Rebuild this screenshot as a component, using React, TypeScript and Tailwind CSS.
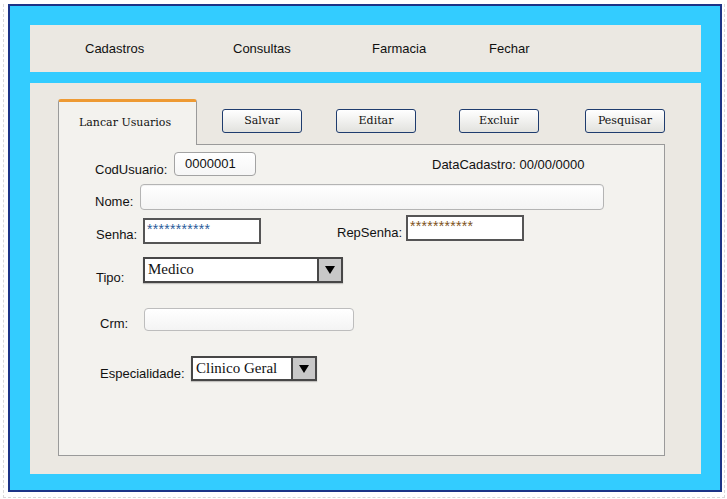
import React from 'react';

const sans = { fontFamily: '"Liberation Sans", Arial, sans-serif' };

function Btn({ label, className }: { label: string; className: string }) {
  return (
    <button
      className={`h-[24px] w-[80px] rounded-[3px] border border-[#1f3c6e] bg-gradient-to-b from-white to-[#e2e2de] text-[11px] text-[#111] font-['DejaVu_Serif',serif] ${className}`}
    >
      {label}
    </button>
  );
}

function Select({ value, width }: { value: string; width: string }) {
  return (
    <div className={`flex h-full ${width} border-2 border-[#474747] bg-white shadow-[0_1px_1px_rgba(0,0,0,0.2)]`}>
      <div className="flex-1 pl-[3px] font-['Liberation_Serif',serif] text-[15px] leading-[20px] text-[#111]">
        {value}
      </div>
      <div className="flex w-[24px] items-center justify-center border-l-2 border-[#474747] bg-[#c8c8c8]">
        <svg width="10" height="8" viewBox="0 0 10 8">
          <path d="M0 0 L10 0 L5 8 Z" fill="#000" />
        </svg>
      </div>
    </div>
  );
}

export default function App() {
  return (
    <div className="h-[499px] w-[727px] overflow-hidden bg-white" style={sans}>
      <div className="ml-[3px] h-[494px] w-[722px] border-b border-l border-r border-dashed border-[#d9d9d9]">
        <div className="ml-[4px] mt-[4px] h-[488px] w-[714px] border-2 border-[#1c3487] bg-[#33ccff] pl-[20px] pt-[19px]">
          {/* menu */}
          <div className="flex h-[47px] w-[671px] items-center bg-[#ebe8e2] pl-[55px] text-[13px] text-[#111]">
            <span className="w-[148px]">Cadastros</span>
            <span className="w-[139px]">Consultas</span>
            <span className="w-[117px]">Farmacia</span>
            <span>Fechar</span>
          </div>

          {/* main panel */}
          <div className="mt-[11px] h-[391px] w-[671px] bg-[#ebe8e2] pl-[28px] pt-[16px]">
            <div className="flex items-start">
              <div className="relative z-10 -mb-px h-[46px] w-[139px] rounded-t-[3px] border-l border-r border-t-[3px] border-[#9a9a9a] border-t-[#ee9a33] bg-[#f3f2ee] pl-[20px] pt-[14px] font-['DejaVu_Serif',serif] text-[11px] leading-[14px] text-[#111]">
                Lancar Usuarios
              </div>
              <Btn label="Salvar" className="ml-[25px] mt-[10px]" />
              <Btn label="Editar" className="ml-[34px] mt-[10px]" />
              <Btn label="Excluir" className="ml-[43px] mt-[10px]" />
              <Btn label="Pesquisar" className="ml-[46px] mt-[10px]" />
            </div>

            <div className="h-[312px] w-[607px] border border-[#9a9a9a] bg-[#f3f2ee] pt-[7px] text-[13px] leading-[15px] text-[#111]">
              {/* CodUsuario */}
              <div className="flex h-[24px] items-start">
                <span className="ml-[36px] mt-[10px] w-[79px]">CodUsuario:</span>
                <div className="h-[24px] w-[82px] rounded-[4px] border border-[#a3a3a3] bg-gradient-to-b from-white to-[#f6f6f6] pl-[10px] pt-[3px]">
                  0000001
                </div>
                <span className="ml-[176px] mt-[5px]">DataCadastro: 00/00/0000</span>
              </div>

              {/* Nome */}
              <div className="mt-[8px] flex h-[26px] items-start">
                <span className="ml-[36px] mt-[10px] w-[45px]">Nome:</span>
                <div className="h-[26px] w-[464px] rounded-[4px] border border-[#b4b4b4] bg-gradient-to-b from-white to-[#f4f4f4] shadow-[inset_0_1px_1px_rgba(0,0,0,0.06)]" />
              </div>

              {/* Senha */}
              <div className="mt-[5px] flex h-[29px] items-start">
                <span className="ml-[37px] mt-[12px] w-[47px]">Senha:</span>
                <div className="mt-[3px] h-[26px] w-[118px] border-2 border-[#555] bg-white pl-[2px] pt-[2px] text-[14px] leading-[14px] tracking-[0.3px] text-[#2a5c9a]">
                  ***********
                </div>
                <span className="ml-[76px] mt-[10px] w-[69px]">RepSenha:</span>
                <div className="h-[26px] w-[118px] border-2 border-[#555] bg-white pl-[2px] pt-[2px] text-[14px] leading-[14px] tracking-[0.3px] text-[#7d5220]">
                  ***********
                </div>
              </div>

              {/* Tipo */}
              <div className="mt-[13px] flex h-[26px] items-start">
                <span className="ml-[37px] mt-[13px] w-[47px]">Tipo:</span>
                <Select value="Medico" width="w-[200px]" />
              </div>

              {/* Crm */}
              <div className="mt-[25px] flex h-[23px] items-start">
                <span className="ml-[41px] mt-[8px] w-[44px]">Crm:</span>
                <div className="h-[23px] w-[210px] rounded-[4px] border border-[#bdbdbd] bg-gradient-to-b from-white to-[#f4f4f4]" />
              </div>

              {/* Especialidade */}
              <div className="mt-[25px] flex h-[25px] items-start">
                <span className="ml-[41px] mt-[10px] w-[91px]">Especialidade:</span>
                <Select value="Clinico Geral" width="w-[126px]" />
              </div>
            </div>
          </div>
        </div>
      </div>
    </div>
  );
}
